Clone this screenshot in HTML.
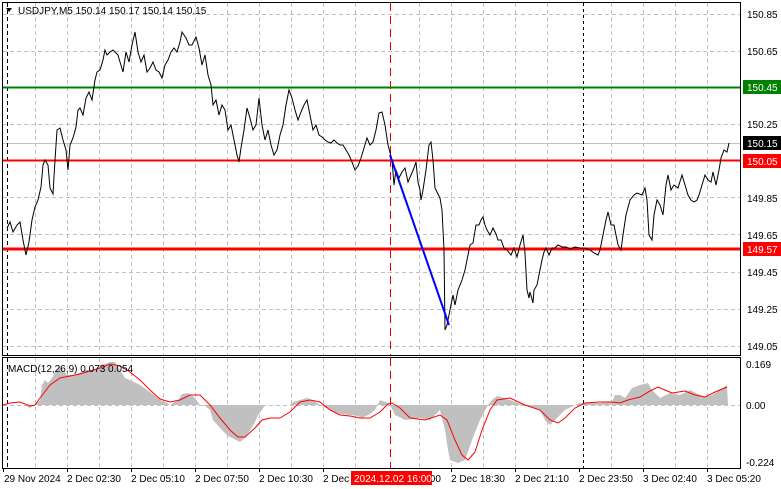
<!DOCTYPE html>
<html><head><meta charset="utf-8"><style>
html,body{margin:0;padding:0;background:#fff;width:781px;height:489px;overflow:hidden}
svg{display:block}
text{font-family:"Liberation Sans",sans-serif;font-size:10px}
</style></head><body>
<svg width="781" height="489" viewBox="0 0 781 489" xmlns="http://www.w3.org/2000/svg">
<rect width="781" height="489" fill="#fff"/>
<g stroke="#c0c0c0" stroke-width="1" stroke-dasharray="4,3" fill="none">
<path d="M3 14.5H740M3 51.5H740M3 124.5H740M3 197.5H740M3 234.5H740M3 272.5H740M3 309.5H740M3 346.5H740"/>
<path d="M35.5 3V355M67.5 3V355M99.5 3V355M131.5 3V355M163.5 3V355M195.5 3V355M227.5 3V355M259.5 3V355M291.5 3V355M323.5 3V355M355.5 3V355M419.5 3V355M451.5 3V355M483.5 3V355M515.5 3V355M547.5 3V355M611.5 3V355M643.5 3V355M675.5 3V355M707.5 3V355"/>
<path d="M35.5 358V468M67.5 358V468M99.5 358V468M131.5 358V468M163.5 358V468M195.5 358V468M227.5 358V468M259.5 358V468M291.5 358V468M323.5 358V468M355.5 358V468M419.5 358V468M451.5 358V468M483.5 358V468M515.5 358V468M547.5 358V468M611.5 358V468M643.5 358V468M675.5 358V468M707.5 358V468"/>
<path d="M3 405.5H740"/>
</g>
<path d="M3 143.5H740" stroke="#c0c0c0"/>
<path d="M7.5 3V355M7.5 358V468" stroke="#000" stroke-dasharray="4,3"/>
<path d="M583.5 3V355M583.5 358V468" stroke="#000" stroke-dasharray="3,3"/>
<path d="M390.5 3V355M390.5 358V468" stroke="#e00000" stroke-dasharray="8,5"/>
<path d="M3 87.5H740" stroke="#008000" stroke-width="2"/>
<path d="M3 160.5H740" stroke="#ff0000" stroke-width="2"/>
<path d="M3 249H740" stroke="#ff0000" stroke-width="3"/>
<polyline fill="none" stroke="#000" stroke-width="1" points="7,228 10,222 13,232 17,225 20,222 23,240 26,255 29,242 32,220 35,207 38,200 41,187 43,165 45,160 48,165 50,188 53,194 55,160 57,130 60,128 63,140 66,150 68,170 70,145 73,138 76,127 78,110 80,108 83,115 86,98 89,92 92,100 95,80 97,72 100,70 103,60 105,50 107,55 110,52 113,50 118,55 120,62 123,72 126,52 129,62 132,45 135,32 138,52 141,62 144,55 147,72 150,68 153,62 156,70 159,72 162,78 165,65 168,60 171,52 174,48 177,52 180,42 182,32 186,38 189,45 192,45 196,37 199,48 202,65 205,55 208,75 211,85 213,105 216,100 219,115 222,105 225,110 228,130 231,125 234,140 237,155 239,162 241,148 244,130 247,108 250,118 253,130 256,125 259,98 262,125 265,140 268,130 271,145 274,155 277,150 280,135 283,125 286,105 289,90 292,98 295,110 298,120 301,112 304,105 307,100 310,115 313,130 316,125 319,135 322,137 325,140 328,142 331,143 334,140 337,143 340,145 343,145 346,150 349,155 352,162 355,170 358,166 361,158 364,148 367,138 370,145 373,142 376,130 379,113 382,112 385,125 388,145 392,160 394,185 396,170 399,178 402,172 405,168 408,182 411,175 414,168 416,162 418,182 420,190 421,200 423,190 426,170 429,145 431,142 433,160 435,188 437,192 440,198 442,210 444,250 445,330 447,325 450,310 453,295 455,305 458,290 460,285 462,280 465,270 468,255 470,245 473,243 476,225 479,225 481,220 483,217 485,225 487,230 490,235 493,228 496,234 498,240 501,240 504,248 507,250 511,255 514,248 517,257 520,245 523,235 525,253 527,290 529,298 530,292 533,303 534,290 537,285 540,270 542,260 544,252 546,248 549,255 552,248 555,248 558,245 562,247 566,247 570,249 575,247 580,248 585,248 590,250 594,253 598,255 600,250 603,235 606,220 608,212 611,225 614,225 618,245 621,250 623,235 626,215 630,200 634,195 637,193 642,195 645,188 647,200 649,235 652,240 654,215 657,200 660,205 663,215 666,185 668,175 671,190 674,185 678,188 682,175 685,185 688,195 691,200 694,202 697,200 699,195 702,185 705,175 708,180 711,182 713,172 716,185 719,170 721,158 724,150 727,152 729,143"/>
<path d="M390 155L449 325" stroke="#0000ff" stroke-width="2"/>
<polygon fill="#c0c0c0" points="3,405 25,405 30,408 35,405 40,400 42,385 45,380 48,383 52,378 55,372 58,368 60,365 63,370 67,375 75,375 85,370 95,370 100,365 105,364 110,362 115,362 120,370 125,378 130,380 140,385 150,392 160,400 165,402 170,405 178,400 182,394 188,393 195,398 200,405 205,406 210,410 213,420 220,428 228,436 240,442 245,438 250,430 255,422 258,415 262,410 265,405 290,405 293,402 300,400 307,398 312,400 320,405 330,410 340,414 350,415 358,416 362,418 370,414 375,410 380,400 386,402 390,405 395,415 405,420 420,418 430,420 440,410 445,430 448,450 450,460 458,463 465,460 472,440 480,420 488,405 492,400 497,396 505,398 515,402 540,410 545,420 550,425 555,420 565,410 575,405 580,403 600,403 612,402 615,395 620,395 625,398 632,388 640,385 648,383 652,390 660,398 670,393 680,395 690,390 700,395 705,397 712,395 720,390 727,385 728,405 3,405"/>
<polyline fill="none" stroke="#ff0000" stroke-width="1" points="3,405 10,403 20,402 30,406 35,405 40,398 50,385 60,378 70,376 80,374 90,371 100,368 110,364 120,366 130,372 140,380 150,390 160,399 170,402 180,400 190,395 200,395 210,405 220,418 230,430 238,437 245,437 255,428 262,420 270,418 280,418 290,412 300,402 310,400 320,402 330,410 340,415 350,416 360,418 370,418 380,412 388,404 392,403 400,408 410,418 425,420 440,415 447,420 455,440 462,455 468,460 475,452 482,430 490,410 497,400 510,398 525,405 540,410 550,420 558,423 565,418 575,408 585,403 600,402 612,402 620,403 628,400 640,397 650,391 658,387 665,390 672,393 685,391 695,395 705,397 715,392 727,387"/>
<rect x="2.5" y="2.5" width="738" height="353" fill="none" stroke="#000"/>
<rect x="2.5" y="357.5" width="738" height="111" fill="none" stroke="#000"/>
<path d="M6 8L12 8L9 12Z" fill="#000"/>
<text x="18" y="14" fill="#000">USDJPY,M5  150.14 150.17 150.14 150.15</text>
<text x="8" y="372" fill="#000">MACD(12,26,9) 0.073 0.054</text>
<g fill="#000">
<text x="747" y="18">150.85</text>
<text x="747" y="55">150.65</text>
<text x="747" y="128">150.25</text>
<text x="747" y="202">149.85</text>
<text x="747" y="239">149.65</text>
<text x="747" y="276">149.45</text>
<text x="747" y="313">149.25</text>
<text x="747" y="350">149.05</text>
<text x="746" y="368">0.169</text>
<text x="746" y="409">0.00</text>
<text x="746" y="466">-0.224</text>
</g>
<rect x="743" y="80" width="38" height="14" fill="#008000"/>
<text x="747" y="91" fill="#fff">150.45</text>
<rect x="743" y="136" width="38" height="14" fill="#000"/>
<text x="747" y="147" fill="#fff">150.15</text>
<rect x="743" y="154" width="38" height="14" fill="#ff0000"/>
<text x="747" y="165" fill="#fff">150.05</text>
<rect x="743" y="242" width="38" height="14" fill="#ff0000"/>
<text x="747" y="253" fill="#fff">149.57</text>
<g stroke="#000"><path d="M3.5 468V472M67.5 468V472M131.5 468V472M195.5 468V472M259.5 468V472M323.5 468V472M451.5 468V472M515.5 468V472M579.5 468V472M643.5 468V472M707.5 468V472"/></g>
<g fill="#000">
<text x="4" y="482">29 Nov 2024</text>
<text x="67" y="482">2 Dec 02:30</text>
<text x="131" y="482">2 Dec 05:10</text>
<text x="195" y="482">2 Dec 07:50</text>
<text x="259" y="482">2 Dec 10:30</text>
<text x="323" y="482">2 Dec 13:20</text>
<text x="387" y="482">2 Dec 16:00</text>
<text x="451" y="482">2 Dec 18:30</text>
<text x="515" y="482">2 Dec 21:10</text>
<text x="579" y="482">2 Dec 23:50</text>
<text x="643" y="482">3 Dec 02:40</text>
<text x="707" y="482">3 Dec 05:20</text>
</g>
<rect x="351" y="471" width="81" height="14" fill="#ff0000"/>
<text x="354" y="482" fill="#fff">2024.12.02 16:00</text>
</svg>
</body></html>
